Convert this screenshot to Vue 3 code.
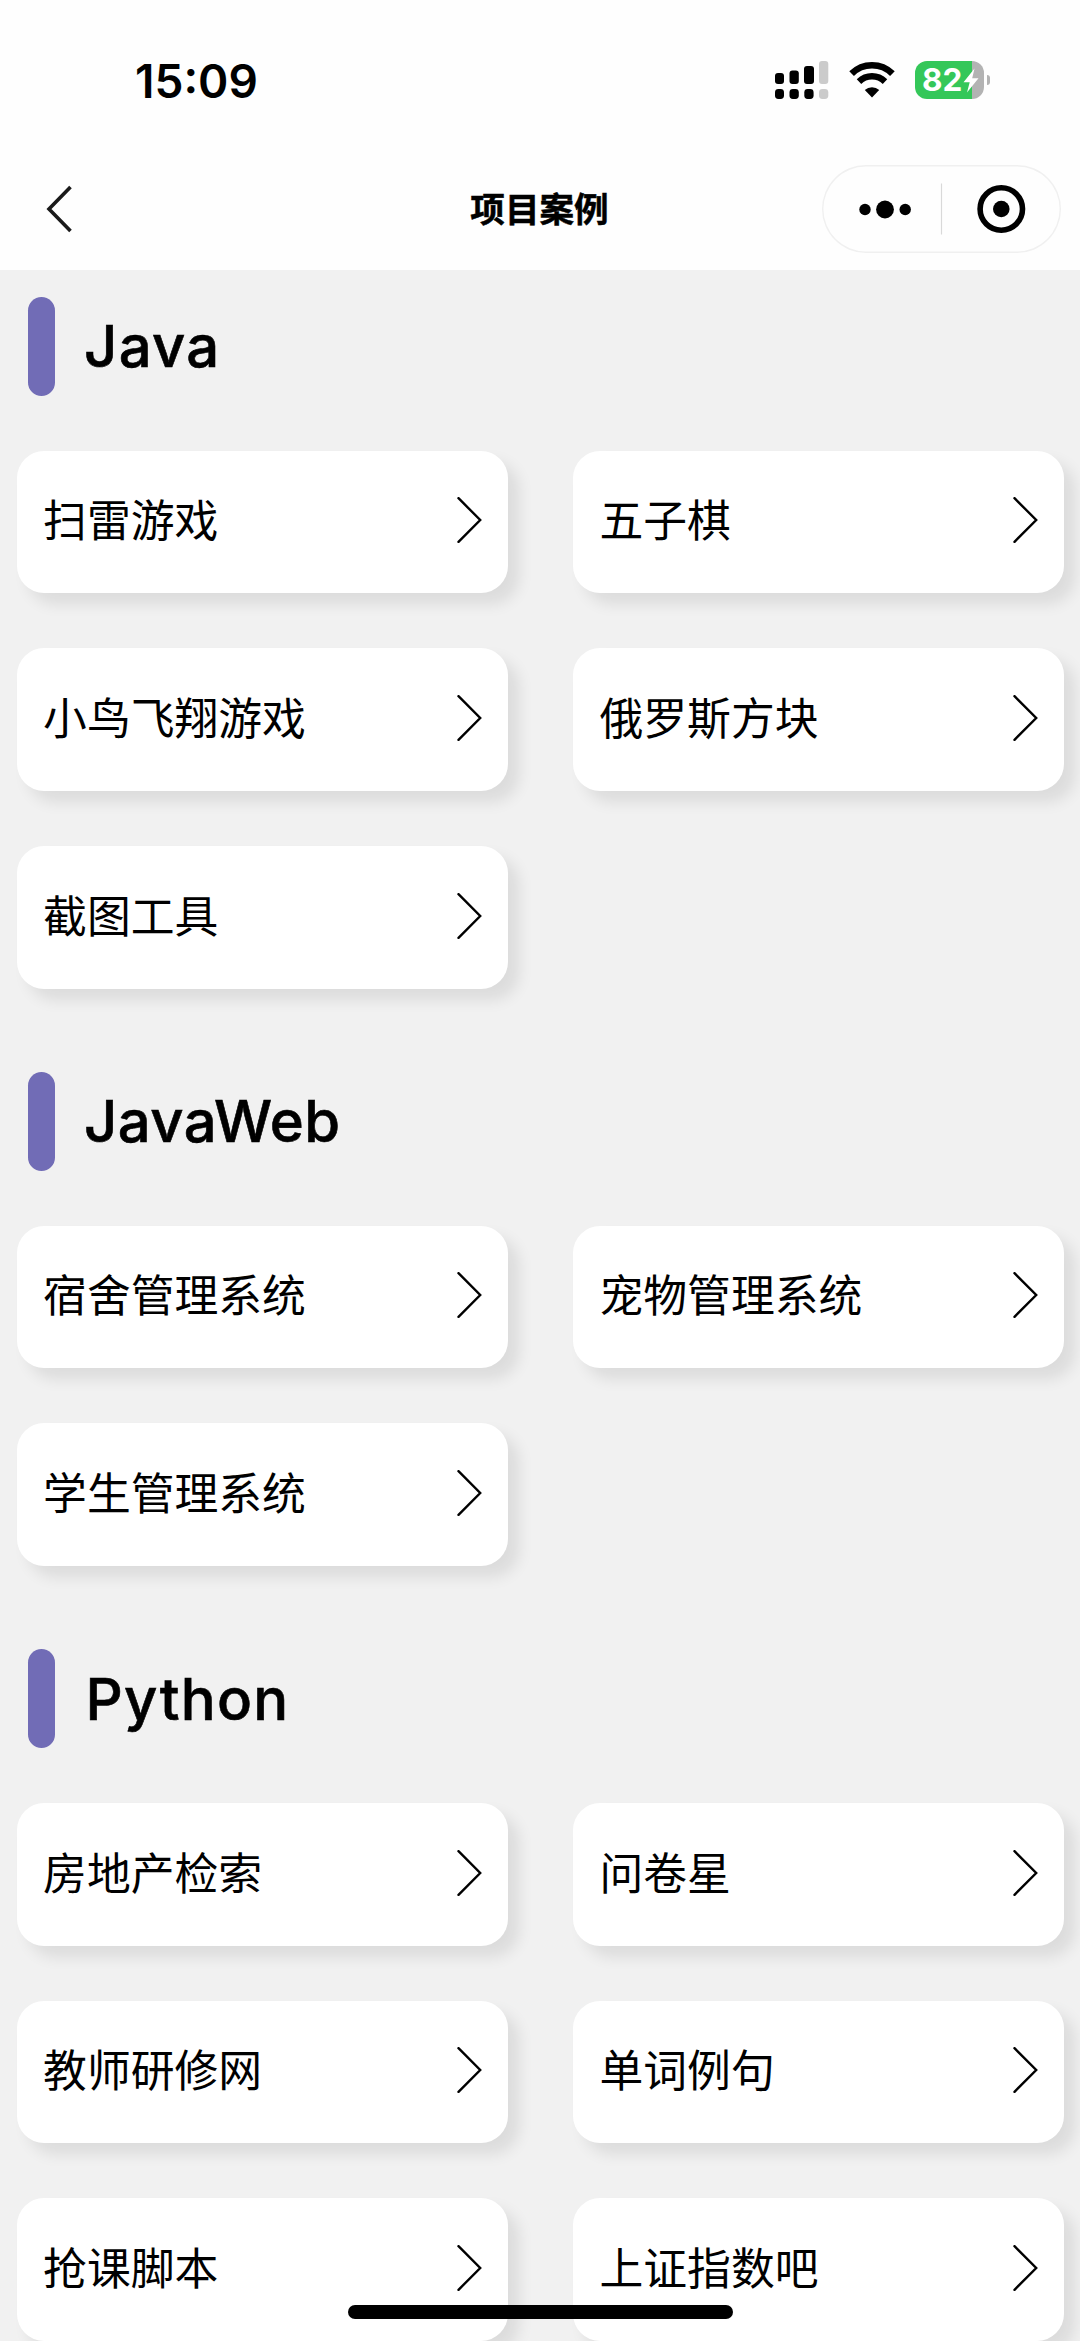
<script setup>
const sections = [
  { title: 'Java', items: ['扫雷游戏', '五子棋', '小鸟飞翔游戏', '俄罗斯方块', '截图工具'] },
  { title: 'JavaWeb', items: ['宿舍管理系统', '宠物管理系统', '学生管理系统'] },
  { title: 'Python', items: ['房地产检索', '问卷星', '教师研修网', '单词例句', '抢课脚本', '上证指数吧'] },
]
</script>

<template>
  <div class="screen">
    <header class="top">
      <div class="status">
        <span class="time">15:09</span>
        <div class="indicators">
          <svg class="signal" width="54" height="38" viewBox="0 0 54 38">
            <rect x="0" y="12" width="9" height="11" rx="3" />
            <rect x="14.5" y="9.5" width="9.3" height="13.5" rx="3" />
            <rect x="29" y="5" width="10" height="18" rx="3" />
            <rect x="44" y="0" width="9.3" height="23" rx="3" fill="#cbcbcb" />
            <rect x="0" y="28" width="9" height="10" rx="3.4" />
            <rect x="14.5" y="28" width="9.3" height="10" rx="3.4" />
            <rect x="29.3" y="28" width="9.3" height="10" rx="3.4" />
            <rect x="44" y="28" width="9.3" height="10" rx="3.4" fill="#cbcbcb" />
          </svg>
          <svg class="wifi" width="46" height="36" viewBox="0 0 46 36">
            <path d="M2.6 11.7a29 29 0 0 1 40.8 0" fill="none" stroke="#000" stroke-width="6.6" />
            <path d="M10 19.6a18.6 18.6 0 0 1 26 0" fill="none" stroke="#000" stroke-width="6.4" />
            <path d="M23 35.4 15.8 28a10.6 10.6 0 0 1 14.4 0Z" />
          </svg>
          <div class="battery">
            <span class="level">82</span>
            <svg class="bolt" width="16" height="25" viewBox="0 0 16 25">
              <path d="M11.5 .5 .5 14.2h6.2L4 24.5 15.5 10.3H9.2Z" fill="#fff" />
            </svg>
          </div>
          <i class="nub"></i>
        </div>
      </div>
      <nav class="nav">
        <svg class="back" width="28" height="50" viewBox="0 0 28 50">
          <path d="M25.5 3 4 25 25.5 47" fill="none" stroke="#1a1a1a" stroke-width="3.6" />
        </svg>
        <h1>项目案例</h1>
        <div class="capsule">
          <svg width="239" height="88" viewBox="0 0 239 88">
            <circle cx="43" cy="44.5" r="5.7" />
            <circle cx="63" cy="44.5" r="8.9" />
            <circle cx="83.2" cy="44.5" r="5.7" />
            <path d="M119.5 18.5v51" stroke="#d9d9d9" stroke-width="1.2" />
            <circle cx="179.3" cy="44" r="21.2" fill="none" stroke="#000" stroke-width="5.6" />
            <circle cx="179.3" cy="44" r="8.3" />
          </svg>
        </div>
      </nav>
    </header>

    <main>
      <section v-for="s in sections" :key="s.title">
        <div class="heading">
          <i class="bar"></i>
          <h2 :class="s.title.toLowerCase()">{{ s.title }}</h2>
        </div>
        <div class="grid">
          <div v-for="item in s.items" :key="item" class="card">
            <span>{{ item }}</span>
            <svg width="25" height="46" viewBox="0 0 25 46">
              <path d="M1.5 1.2 23.2 23 1.5 44.8" fill="none" stroke="#000" stroke-width="2.4" stroke-linecap="round" />
            </svg>
          </div>
        </div>
      </section>
    </main>
    <div class="home"></div>
  </div>
</template>

<style>
body { margin: 0; background: #f1f1f1; }
</style>

<style scoped>
.screen {
  position: relative;
  width: 1080px;
  height: 2341px;
  overflow: hidden;
  background: #f1f1f1;
  color: #000;
  font-family: Inter, "Noto Sans CJK SC", sans-serif;
}
.top { height: 269.5px; background: #fefefe; }
.status {
  box-sizing: border-box;
  height: 160px;
  padding: 0 90px 0 135px;
  display: flex;
  justify-content: space-between;
}
.time {
  margin-top: 51px;
  font-size: 46px;
  line-height: 60px;
  font-weight: 600;
}
.indicators { display: flex; align-items: center; height: 38px; margin-top: 61px; }
.wifi { margin: 0 20px 0 20px; }
.battery {
  box-sizing: border-box;
  width: 69px;
  height: 38px;
  padding-left: 7px;
  border-radius: 12px;
  display: flex;
  align-items: center;
  background: linear-gradient(90deg, #34c759 57px, #b3b3b3 57px);
}
.level { width: 41px; color: #fff; font-size: 31.5px; line-height: 38px; font-weight: 700; }
.nub { width: 3px; height: 10px; margin-left: 3px; border-radius: 0 4px 4px 0; background: #b3b3b3; }
.nav {
  height: 98px;
  display: grid;
  grid-template-columns: 1fr auto 1fr;
  align-items: center;
}
.back { margin-left: 44.8px; }
h1 {
  margin: 0 1px 0 0;
  font-size: 34.6px;
  line-height: 50px;
  font-weight: 700;
  -webkit-text-stroke: .5px #000;
}
.capsule {
  box-sizing: border-box;
  width: 239px;
  height: 88px;
  justify-self: end;
  margin-right: 19px;
  border-radius: 44px;
  box-shadow: inset 0 0 0 1.4px #f0f0f0;
}
.capsule svg, .card svg { display: block; }
main { padding: 27.2px 16px 0 16.6px; }
section { margin-bottom: 83px; }
.heading { display: flex; align-items: center; height: 99.6px; padding-left: 11px; }
.bar { width: 27.5px; height: 99.6px; border-radius: 14px; background: #716cb6; }
h2 {
  margin: 0 0 0 29px;
  font-size: 58px;
  line-height: 70px;
  font-weight: 500;
  -webkit-text-stroke: .6px #000;
  white-space: nowrap;
}
.java { letter-spacing: 1.3px; }
.javaweb { letter-spacing: .4px; }
.python { letter-spacing: 1.3px; margin-left: 30.5px; }
.grid {
  margin-top: 54.6px;
  display: grid;
  grid-template-columns: 491px 491px;
  justify-content: space-between;
  row-gap: 55.1px;
}
.card {
  box-sizing: border-box;
  height: 142.5px;
  padding: 0 26px 3.4px 26.5px;
  border-radius: 27px;
  display: flex;
  align-items: center;
  justify-content: space-between;
  background: #fff;
  box-shadow: 11px 11px 15px rgba(0, 0, 0, .09);
}
.card span {
  padding-bottom: 4px;
  font-family: "Noto Sans CJK SC", sans-serif;
  font-size: 43.8px;
  line-height: 60px;
  font-weight: 400;
}
.home {
  position: absolute;
  left: 348px;
  top: 2305px;
  width: 385px;
  height: 14px;
  border-radius: 7px;
  background: #000;
}
</style>
